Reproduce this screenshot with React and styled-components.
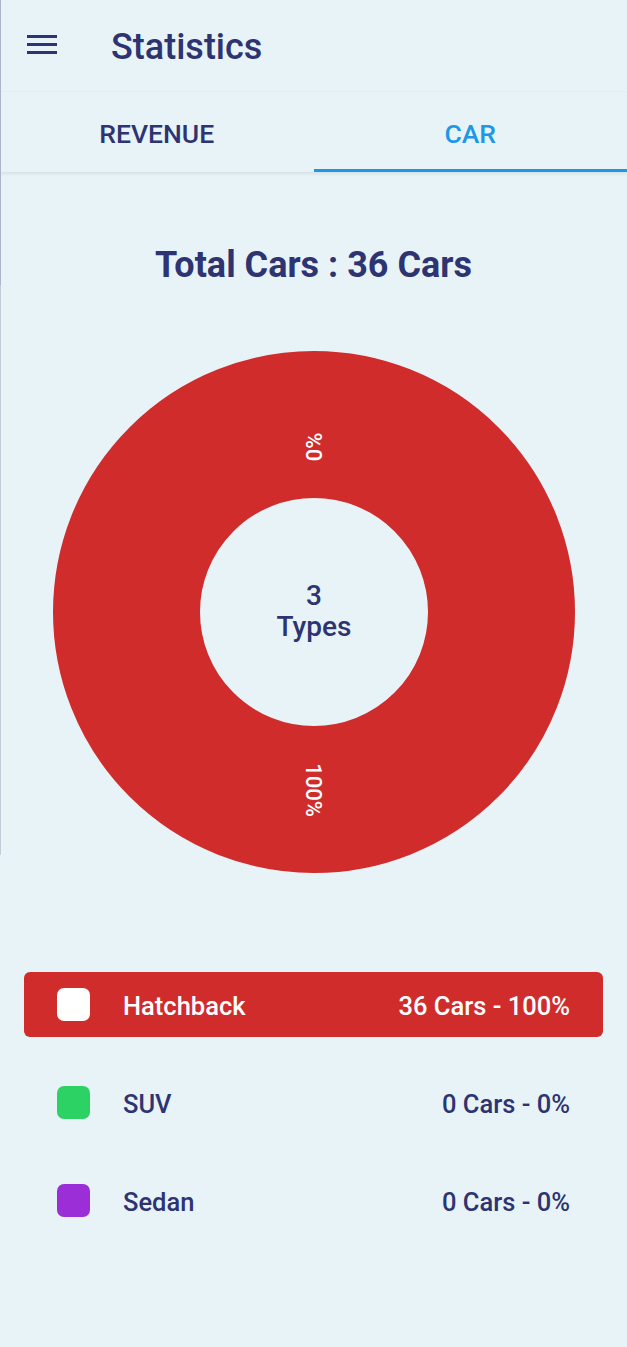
import React from 'react'
import styled, { createGlobalStyle } from 'styled-components'

const Colors = {
  Bg: '#E8F3F8',
  Navy: '#2D3471',
  Blue: '#1E98E6',
  Red: '#D02C2C',
  Green: '#2DD265',
  Purple: '#9B2ED6',
}

const GlobalStyle = createGlobalStyle`
  html, body {
    margin: 0;
    padding: 0;
    background: ${Colors.Bg};
  }
  body {
    font-family: Roboto, "Liberation Sans", sans-serif;
    color: ${Colors.Navy};
  }
`

const Screen = styled.div`
  position: relative;
  width: 627px;
  min-height: 1347px;
  background: ${Colors.Bg};
  overflow: hidden;

  &::before { /* drawer edge peeking in */
    content: '';
    position: absolute;
    left: 0;
    top: 0;
    width: 1px;
    height: 855px;
    background: linear-gradient(#a9b6cc 0, #a9b6cc 285px, #c3ccd8 285px);
  }
`

const Toolbar = styled.header`
  display: flex;
  align-items: center;
  height: 92px;
  padding-left: 27px;
  box-sizing: border-box;
  border-bottom: 1px solid #e2eef3;
`

const MenuButton = styled.div`
  display: flex;
  flex-direction: column;
  gap: 5px;
  width: 30px;
  margin-top: -2px;

  & span {
    display: block;
    height: 3px;
    background: ${Colors.Navy};
  }
`

const Title = styled.h1`
  margin: 2px 0 0 54px;
  font-size: 36px;
  font-weight: 500;
  color: ${Colors.Navy};
`

const Tabs = styled.nav`
  display: flex;
  height: 80px;
  box-shadow: 0 2px 3px rgba(0, 0, 0, 0.08);
`

const Tab = styled.div`
  flex: 1;
  display: flex;
  align-items: center;
  justify-content: center;
  font-size: 26.5px;
  font-weight: 500;
  padding-top: 6px;
  box-sizing: border-box;
  color: ${props => props.active ? Colors.Blue : Colors.Navy};
  border-bottom: 3px solid ${props => props.active ? Colors.Blue : 'transparent'};
`

const Content = styled.main`
  display: flex;
  flex-direction: column;
  align-items: center;
  padding-top: 73px;
`

const Heading = styled.h2`
  margin: 0;
  font-size: 36px;
  font-weight: 700;
  line-height: 40px;
  color: ${Colors.Navy};
`

const Chart = styled.svg`
  display: block;
  margin-top: 65px;
  margin-left: 1px;
`

const Legend = styled.div`
  align-self: stretch;
  display: flex;
  flex-direction: column;
  gap: 33px;
  margin: 98px 24px 0;
`

const Row = styled.div`
  display: flex;
  align-items: center;
  height: 65px;
  padding: 2px 33px 0;
  box-sizing: border-box;
  border-radius: 6px;
  font-size: 25.5px;
  font-weight: 500;
  background: ${props => props.active ? Colors.Red : 'transparent'};
  color: ${props => props.active ? '#fff' : Colors.Navy};

  & .value {
    margin-left: auto;
  }
`

const Swatch = styled.span`
  width: 33px;
  height: 33px;
  margin-top: -2px;
  border-radius: 7px;
  margin-right: 33px;
  background: ${props => props.color};
`

const types = [
  { name: 'Hatchback', count: 36, color: Colors.Red },
  { name: 'SUV', count: 0, color: Colors.Green },
  { name: 'Sedan', count: 0, color: Colors.Purple },
]

const Donut = () => (
  <Chart width="524" height="524" viewBox="0 0 524 524">
    <circle cx="262" cy="262" r="187.5" fill="none" stroke={Colors.Red} strokeWidth="147" />
    <g fill="#fff" fontFamily="Roboto, sans-serif" fontSize="22" fontWeight="500" textAnchor="middle">
      <text transform="translate(262 97) rotate(-90)" dy="8">0%</text>
      <text transform="translate(262 440) rotate(90)" dy="8">100%</text>
    </g>
    <g fill={Colors.Navy} fontFamily="Roboto, sans-serif" fontSize="28" fontWeight="500" textAnchor="middle">
      <text x="262" y="255">3</text>
      <text x="262" y="286">Types</text>
    </g>
  </Chart>
)

export default function App() {
  const total = types.reduce((s, t) => s + t.count, 0)
  return (
    <Screen>
      <GlobalStyle />
      <Toolbar>
        <MenuButton><span /><span /><span /></MenuButton>
        <Title>Statistics</Title>
      </Toolbar>
      <Tabs>
        <Tab>REVENUE</Tab>
        <Tab active>CAR</Tab>
      </Tabs>
      <Content>
        <Heading>Total Cars : {total} Cars</Heading>
        <Donut />
        <Legend>
          {types.map((t, i) => (
            <Row key={t.name} active={i === 0}>
              <Swatch color={i === 0 ? '#fff' : t.color} />
              {t.name}
              <span className="value">
                {t.count} Cars - {Math.round((t.count / total) * 100)}%
              </span>
            </Row>
          ))}
        </Legend>
      </Content>
    </Screen>
  )
}
